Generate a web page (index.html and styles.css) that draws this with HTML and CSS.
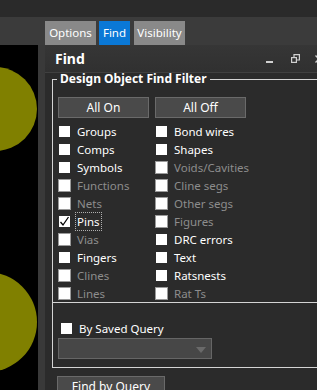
FILE: index.html
```html
<!DOCTYPE html>
<html>
<head>
    <title>Find</title>
    <link rel="stylesheet" href="styles.css">
</head>
<body>
    <div class="topbar"></div>
    <div class="tabbar">
        <span class="tab tab-options">Options</span>
        <span class="tab tab-find active">Find</span>
        <span class="tab tab-vis">Visibility</span>
    </div>

    <div class="main">
        <div class="canvas">
            <div class="pad pad-top"></div>
            <div class="pad pad-bottom"></div>
        </div>
        <div class="splitter"></div>

        <div class="panel">
            <div class="panel-head">
                <span class="panel-title">Find</span>
                <span class="head-icons">
                    <svg class="ic-min" width="8" height="8" viewBox="0 0 8 8"><rect x="0" y="6" width="7" height="2" fill="#d0d0d0"/></svg>
                    <svg class="ic-restore" width="9" height="9" viewBox="0 0 9 9" fill="none" stroke="#d0d0d0" stroke-width="1.2"><rect x="0.6" y="3.6" width="4.8" height="4.8"/><path d="M3 3.6V0.6h5.4v5.4H5.4"/></svg>
                    <svg class="ic-close" width="8" height="8" viewBox="0 0 8 8" stroke="#d0d0d0" stroke-width="1.4"><path d="M0.5 0.5l7 7M7.5 0.5l-7 7"/></svg>
                </span>
            </div>

            <fieldset class="filter">
                <legend>Design Object Find Filter</legend>
                <div class="btn-row">
                    <button class="btn">All On</button>
                    <button class="btn">All Off</button>
                </div>
                <div class="opt-grid">
                    <label class="opt"><span class="box"></span>Groups</label>
                    <label class="opt"><span class="box"></span>Bond wires</label>
                    <label class="opt"><span class="box"></span>Comps</label>
                    <label class="opt"><span class="box"></span>Shapes</label>
                    <label class="opt"><span class="box"></span>Symbols</label>
                    <label class="opt off"><span class="box"></span>Voids/Cavities</label>
                    <label class="opt off"><span class="box"></span>Functions</label>
                    <label class="opt off"><span class="box"></span>Cline segs</label>
                    <label class="opt off"><span class="box"></span>Nets</label>
                    <label class="opt off"><span class="box"></span>Other segs</label>
                    <label class="opt checked"><span class="box"><svg width="11" height="11" viewBox="0 0 11 11" fill="none" stroke="#000" stroke-width="1.3"><path d="M1.5 6l2.5 3 5.5-8"/></svg></span><span class="focus">Pins</span></label>
                    <label class="opt off"><span class="box"></span>Figures</label>
                    <label class="opt off"><span class="box"></span>Vias</label>
                    <label class="opt"><span class="box"></span>DRC errors</label>
                    <label class="opt"><span class="box"></span>Fingers</label>
                    <label class="opt"><span class="box"></span>Text</label>
                    <label class="opt off"><span class="box"></span>Clines</label>
                    <label class="opt"><span class="box"></span>Ratsnests</label>
                    <label class="opt off"><span class="box"></span>Lines</label>
                    <label class="opt off"><span class="box"></span>Rat Ts</label>
                </div>
            </fieldset>

            <div class="query-box">
                <label class="opt saved"><span class="box"></span>By Saved Query</label>
                <div class="dropdown"><span class="arrow"></span></div>
            </div>

            <button class="btn find-query">Find by Query</button>
        </div>
    </div>
</body>
</html>
```

FILE: styles.css
```css
body {
    margin: 0;
    background-color: #2b2b2b;
    font-family: "Noto Sans", "Open Sans", sans-serif;
    font-size: 11.5px;
    color: #fff;
    overflow: hidden;
    height: 390px;
}

.topbar {
    height: 17px;
    background-color: #2a2a2a;
}

.tabbar {
    height: 28px;
    background-color: #3b3b3b;
    display: flex;
    align-items: flex-end;
    padding-left: 45px;
}

.tab {
    height: 24px;
    line-height: 24px;
    text-align: center;
    background-color: #898989;
    color: #fff;
}

.tab-options {
    width: 51px;
    margin-right: 3px;
}

.tab-find {
    width: 31px;
    margin-right: 4px;
}

.tab-vis {
    width: 51px;
}

.tab.active {
    background-color: #0a78d6;
}

.main {
    display: flex;
    height: 345px;
}

.canvas {
    position: relative;
    flex: 0 0 38px;
    background-color: #000;
    overflow: hidden;
}

.pad {
    position: absolute;
    border-radius: 50%;
    background-color: #808000;
}

.pad-top {
    left: -47px;
    top: 22px;
    width: 84px;
    height: 84px;
}

.pad-bottom {
    left: -63px;
    top: 227px;
    width: 100px;
    height: 100px;
}

.splitter {
    flex: 0 0 7px;
    background-color: #393939;
}

.panel {
    flex: 1;
    min-width: 0;
    overflow: hidden;
    background-color: #2b2b2b;
}

.panel-head {
    height: 27px;
    display: flex;
    align-items: center;
    padding: 0 0 0 10px;
    background: linear-gradient(#363636, #303030);
    border-bottom: 1px solid #404040;
}

.panel-title {
    font-weight: bold;
    font-size: 14px;
}

.head-icons {
    margin-left: auto;
    margin-right: -6px;
    display: flex;
    align-items: center;
}

.ic-restore {
    margin-left: 17px;
}

.ic-close {
    margin-left: 15px;
}

.filter {
    margin: 0 -10px 0 7px;
    padding: 0 0 0 5px;
    border: 1px solid #d4d4d4;
    border-bottom: none;
    min-width: 0;
}

.filter legend {
    font-weight: bold;
    font-size: 12px;
    line-height: 12px;
    padding: 0 3px;
    margin-left: -1px;
}

.btn-row {
    display: flex;
    gap: 6px;
    margin-top: 12px;
    margin-bottom: 4px;
}

.btn {
    height: 21px;
    width: 91px;
    padding: 0;
    font-family: inherit;
    font-size: 12px;
    color: #fff;
    background-color: #4a4a4a;
    border: 1px solid #6a6a6a;
}

.opt-grid {
    display: grid;
    grid-template-columns: 97px 97px;
    grid-auto-rows: 18px;
}

.opt {
    display: flex;
    align-items: center;
    gap: 6px;
    white-space: nowrap;
}

.box {
    width: 11px;
    height: 11px;
    border: 1px solid #2b2b2b;
    background-color: #fff;
    display: flex;
    align-items: center;
    justify-content: center;
}

.opt.off {
    color: #8d8d8d;
}

.opt.off .box {
    border-color: #9a9a9a;
}

.focus {
    outline: 1px dotted #b0b0b0;
    outline-offset: 1px;
}

.query-box {
    margin: 0 -10px 0 7px;
    border: 1px solid #d4d4d4;
    height: 66px;
    padding: 18px 0 0 5px;
    box-sizing: border-box;
}

.opt.saved {
    padding-left: 2px;
    margin-bottom: 2px;
}

.dropdown {
    position: relative;
    width: 154px;
    height: 21px;
    box-sizing: border-box;
    background-color: #474747;
    border: 1px solid #666;
}

.arrow {
    position: absolute;
    right: 5px;
    top: 8px;
    border-left: 5px solid transparent;
    border-right: 5px solid transparent;
    border-top: 6px solid #6a6a6a;
}

.find-query {
    display: block;
    width: 108px;
    margin: 8px 0 0 12px;
}
```
